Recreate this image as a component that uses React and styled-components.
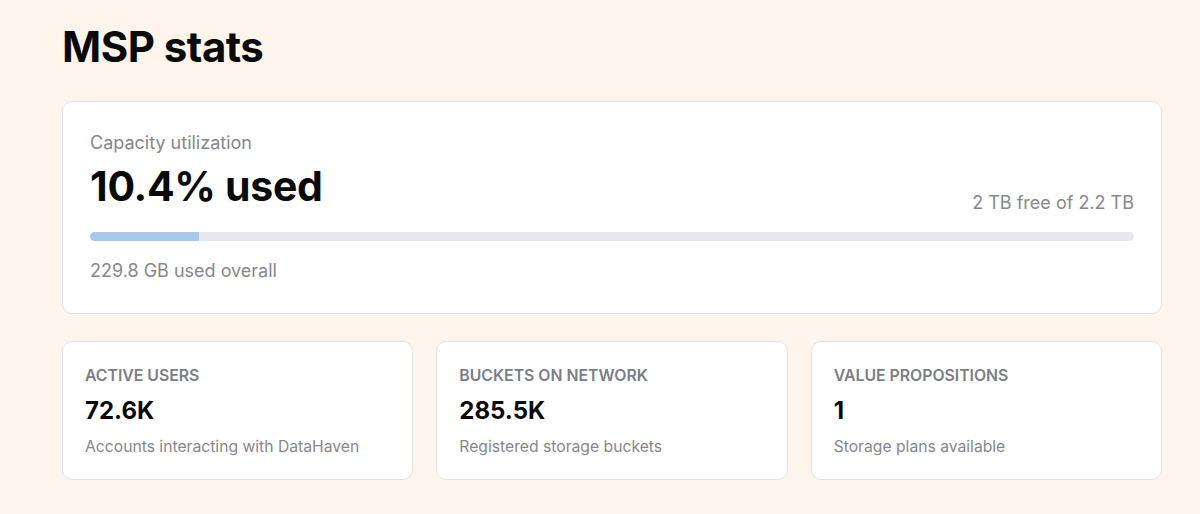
import React from "react";
import styled, { createGlobalStyle } from "styled-components";

const Global = createGlobalStyle`
  html, body { margin: 0; padding: 0; background: #fdf5ec; }
  body { font-family: Inter, "Noto Sans", sans-serif; color: #0a0a0a; -webkit-font-smoothing: antialiased; }
`;

const Page = styled.main`
  width: 1100px;
  padding: 22px 0 0 62px;
  display: flex;
  flex-direction: column;
`;

const Title = styled.h1`
  margin: 0 0 29px;
  font-size: 42px;
  line-height: 50px;
  font-weight: 700;
  letter-spacing: -0.5px;
`;

const Card = styled.section`
  background: #ffffff;
  border: 1px solid #e4e2e0;
  border-radius: 10px;
  box-sizing: border-box;
`;

const CapacityCard = styled(Card)`
  padding: 30px 27px 31px 27px;
  display: flex;
  flex-direction: column;
`;

const Muted = styled.div`
  color: #86878c;
  font-size: 18px;
  line-height: 22px;
`;

const HeadRow = styled.div`
  display: flex;
  justify-content: space-between;
  align-items: flex-end;
  margin-top: 8px;
`;

const BigValue = styled.div`
  font-size: 41px;
  line-height: 48px;
  font-weight: 700;
  letter-spacing: -0.3px;
`;

const FreeText = styled(Muted)`
  margin-bottom: -4px;
`;

const Track = styled.div`
  margin-top: 22px;
  height: 9px;
  border-radius: 5px;
  background: #e8e8ec;
  overflow: hidden;
`;

const Fill = styled.div`
  height: 100%;
  background: #a6c8ea;
  border-radius: 5px 0 0 5px;
`;

const Footnote = styled(Muted)`
  margin-top: 19px;
`;

const Grid = styled.div`
  margin-top: 27px;
  display: grid;
  grid-template-columns: repeat(3, 1fr);
  gap: 23px;
`;

const StatCard = styled(Card)`
  height: 139px;
  padding: 24px 22px;
  display: flex;
  flex-direction: column;
`;

const StatLabel = styled.div`
  font-size: 15.8px;
  line-height: 20px;
  font-weight: 600;
  color: #7b7e86;
  text-transform: uppercase;
`;

const StatValue = styled.div`
  margin-top: 11px;
  font-size: 24px;
  line-height: 28px;
  font-weight: 700;
`;

const StatDesc = styled.div`
  margin-top: 12px;
  font-size: 15.7px;
  line-height: 20px;
  color: #86878c;
`;

const stats = [
  { label: "Active users", value: "72.6K", desc: "Accounts interacting with DataHaven" },
  { label: "Buckets on network", value: "285.5K", desc: "Registered storage buckets" },
  { label: "Value propositions", value: "1", desc: "Storage plans available" },
];

export default function App() {
  const pct = 10.4;
  return (
    <>
      <Global />
      <Page>
        <Title>MSP stats</Title>
        <CapacityCard>
          <Muted>Capacity utilization</Muted>
          <HeadRow>
            <BigValue>10.4% used</BigValue>
            <FreeText>2 TB free of 2.2 TB</FreeText>
          </HeadRow>
          <Track>
            <Fill style={{ width: `${pct}%` }} />
          </Track>
          <Footnote>229.8 GB used overall</Footnote>
        </CapacityCard>
        <Grid>
          {stats.map((s) => (
            <StatCard key={s.label}>
              <StatLabel>{s.label}</StatLabel>
              <StatValue>{s.value}</StatValue>
              <StatDesc>{s.desc}</StatDesc>
            </StatCard>
          ))}
        </Grid>
      </Page>
    </>
  );
}
